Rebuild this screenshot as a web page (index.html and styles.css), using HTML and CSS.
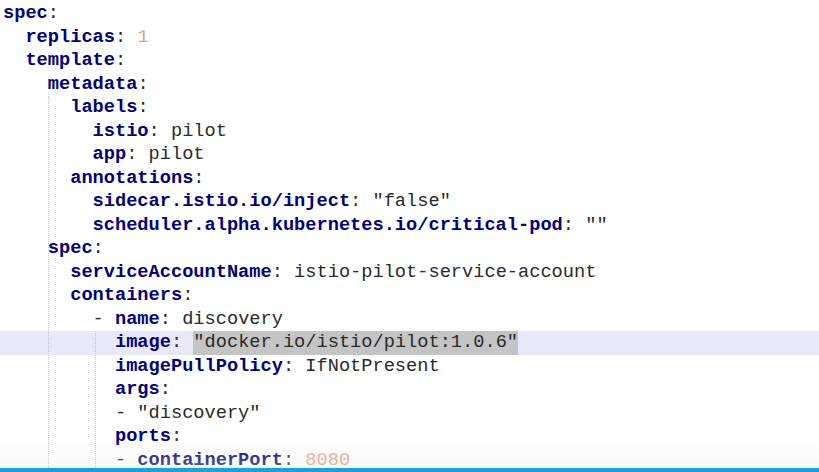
FILE: index.html
```html
<!DOCTYPE html>
<html>
<head>
<meta charset="utf-8">
<link rel="stylesheet" href="styles.css">
</head>
<body>
<div class="editor">
  <div class="code">
    <div class="ln"><span class="k">spec</span>:</div>
    <div class="ln">  <span class="k">replicas</span>: <span class="n">1</span></div>
    <div class="ln">  <span class="k">template</span>:</div>
    <div class="ln">    <span class="k">metadata</span>:</div>
    <div class="ln">      <span class="k">labels</span>:</div>
    <div class="ln">        <span class="k">istio</span>: pilot</div>
    <div class="ln">        <span class="k">app</span>: pilot</div>
    <div class="ln">      <span class="k">annotations</span>:</div>
    <div class="ln">        <span class="k">sidecar.istio.io/inject</span>: "false"</div>
    <div class="ln">        <span class="k">scheduler.alpha.kubernetes.io/critical-pod</span>: ""</div>
    <div class="ln">    <span class="k">spec</span>:</div>
    <div class="ln">      <span class="k">serviceAccountName</span>: istio-pilot-service-account</div>
    <div class="ln">      <span class="k">containers</span>:</div>
    <div class="ln">        - <span class="k">name</span>: discovery</div>
    <div class="ln current">          <span class="k">image</span>: <span class="sel">"docker.io/istio/pilot:1.0.6"</span></div>
    <div class="ln">          <span class="k">imagePullPolicy</span>: IfNotPresent</div>
    <div class="ln">          <span class="k">args</span>:</div>
    <div class="ln">          - "discovery"</div>
    <div class="ln">          <span class="k">ports</span>:</div>
    <div class="ln">          - <span class="k">containerPort</span>: <span class="n">8080</span></div>
  </div>
  <div class="guide g1"></div>
  <div class="guide g2"></div>
  <div class="fade"></div>
  <div class="bar"></div>
</div>
</body>
</html>
```
FILE: styles.css
```css
html, body {
  margin: 0;
  padding: 0;
  background: #ffffff;
}
.editor {
  position: relative;
  width: 819px;
  height: 472px;
  overflow: hidden;
  background: #ffffff;
}
.code {
  padding-top: 2px;
  font-family: "Courier New", "Nimbus Mono PS", "Nimbus Mono L", "FreeMono", "Courier 10 Pitch", Courier, "Liberation Mono", monospace;
  font-size: 18.67px;
  color: #2a2a2a;
}
.ln {
  height: 23.5px;
  line-height: 23.5px;
  white-space: pre;
  padding-left: 3px;
}
.ln.current {
  background: #e8e8f8;
}
.k {
  color: #000080;
  font-weight: bold;
}
.n {
  color: #e2a283;
}
.sel {
  background: #c4c4c4;
  display: inline-block;
  height: 23.5px;
}
.guide {
  position: absolute;
  width: 0;
  border-left: 1px dotted #c4c4c4;
  bottom: 4px;
}
.g1 {
  left: 48px;
  top: 96px;
}
.g2 {
  left: 95px;
  top: 331px;
}
.fade {
  position: absolute;
  left: 0;
  right: 0;
  bottom: 4px;
  height: 30px;
  background: linear-gradient(to bottom, rgba(240,240,240,0), rgba(236,236,236,0.35));
  pointer-events: none;
}
.bar {
  position: absolute;
  left: 0;
  right: 0;
  bottom: 0;
  height: 4px;
  background: #14a5df;
}
```
